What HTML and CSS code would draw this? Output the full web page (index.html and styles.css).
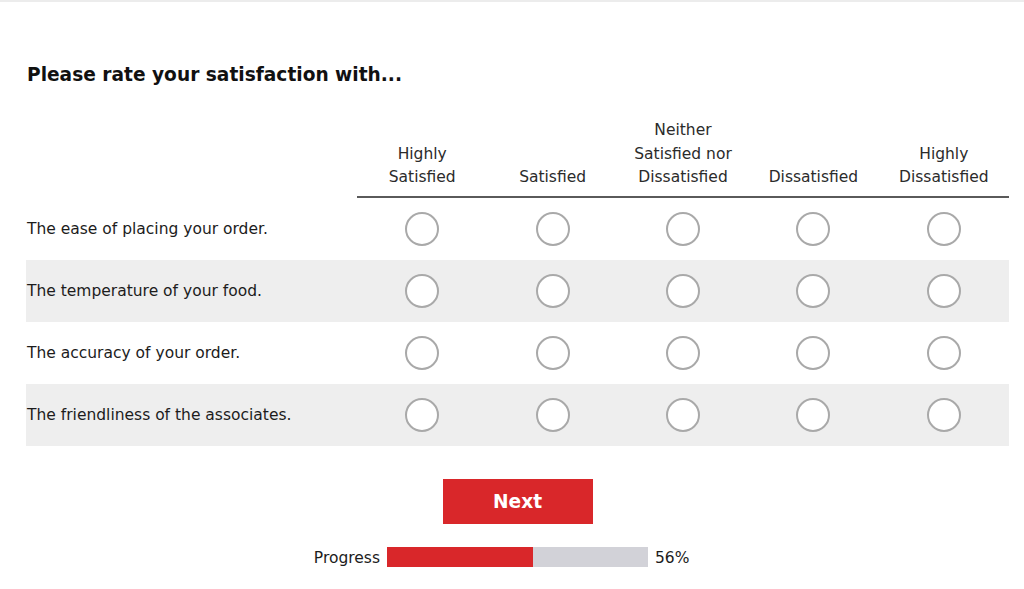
FILE: index.html
```html
<!DOCTYPE html>
<html lang="en">
  <head>
    <meta charset="UTF-8" />
    <meta name="viewport" content="width=device-width, initial-scale=1.0" />
    <title>Survey</title>
    <link rel="stylesheet" href="styles.css">
  </head>
  <body>
    <div class="page">
      <h1 class="question">Please rate your satisfaction with...</h1>
      <div class="matrix">
        <div class="row head">
          <div class="label"></div>
          <div class="col">Highly<br />Satisfied</div>
          <div class="col">Satisfied</div>
          <div class="col">Neither<br />Satisfied nor<br />Dissatisfied</div>
          <div class="col">Dissatisfied</div>
          <div class="col">Highly<br />Dissatisfied</div>
        </div>
        <div class="row">
          <div class="label">The ease of placing your order.</div>
          <div class="cell"><span class="radio"></span></div>
          <div class="cell"><span class="radio"></span></div>
          <div class="cell"><span class="radio"></span></div>
          <div class="cell"><span class="radio"></span></div>
          <div class="cell"><span class="radio"></span></div>
        </div>
        <div class="row alt">
          <div class="label">The temperature of your food.</div>
          <div class="cell"><span class="radio"></span></div>
          <div class="cell"><span class="radio"></span></div>
          <div class="cell"><span class="radio"></span></div>
          <div class="cell"><span class="radio"></span></div>
          <div class="cell"><span class="radio"></span></div>
        </div>
        <div class="row">
          <div class="label">The accuracy of your order.</div>
          <div class="cell"><span class="radio"></span></div>
          <div class="cell"><span class="radio"></span></div>
          <div class="cell"><span class="radio"></span></div>
          <div class="cell"><span class="radio"></span></div>
          <div class="cell"><span class="radio"></span></div>
        </div>
        <div class="row alt">
          <div class="label">The friendliness of the associates.</div>
          <div class="cell"><span class="radio"></span></div>
          <div class="cell"><span class="radio"></span></div>
          <div class="cell"><span class="radio"></span></div>
          <div class="cell"><span class="radio"></span></div>
          <div class="cell"><span class="radio"></span></div>
        </div>
      </div>
      <div class="actions">
        <button class="next">Next</button>
      </div>
      <div class="progress">
        <span class="progress-label">Progress</span>
        <div class="bar"><div class="fill" style="width: 56%"></div></div>
        <span class="progress-value">56%</span>
      </div>
    </div>
  </body>
</html>
```

FILE: styles.css
```css
body {
  margin: 0;
  padding: 0;
  background-color: white;
  font-family: "DejaVu Sans", Verdana, sans-serif;
  color: #1c1c1c;
  border-top: 2px solid #ececec;
  height: 587px;
}
.page {
  width: 983px;
  margin-left: 26px;
  padding-top: 61px;
}
.question {
  margin: 0 0 0 1px;
  font-size: 18.6px;
  line-height: 24px;
  font-weight: bold;
  color: #111;
}
.matrix {
  margin-top: 32px;
}
.row {
  display: grid;
  grid-template-columns: 331px repeat(5, 1fr);
  height: 62px;
  align-items: center;
}
.row.alt {
  background-color: #eeeeee;
}
.row.head {
  height: auto;
  align-items: end;
}
.label {
  padding-left: 1px;
  font-size: 15.5px;
}
.col {
  text-align: center;
  font-size: 15.5px;
  line-height: 23.5px;
  color: #2b2b2b;
  padding-bottom: 6px;
  border-bottom: 2px solid #5a5a5a;
}
.cell {
  display: flex;
  justify-content: center;
}
.radio {
  width: 30px;
  height: 30px;
  border: 2px solid #a9a9a9;
  border-radius: 50%;
  background-color: white;
}
.actions {
  display: flex;
  justify-content: center;
  margin-top: 33px;
}
.next {
  width: 150px;
  height: 45px;
  border: none;
  background-color: #d9272a;
  color: white;
  font-family: "DejaVu Sans", Verdana, sans-serif;
  font-size: 18.6px;
  font-weight: bold;
  padding: 0;
}
.progress {
  display: grid;
  grid-template-columns: 1fr 261px 1fr;
  align-items: center;
  column-gap: 7px;
  margin-top: 22px;
  font-size: 15.5px;
  line-height: 20px;
}
.progress-label,
.progress-value {
  padding-top: 2px;
}
.progress-label {
  justify-self: end;
}
.bar {
  height: 20px;
  background-color: #d2d2d8;
}
.fill {
  height: 100%;
  background-color: #d9272a;
}
```
